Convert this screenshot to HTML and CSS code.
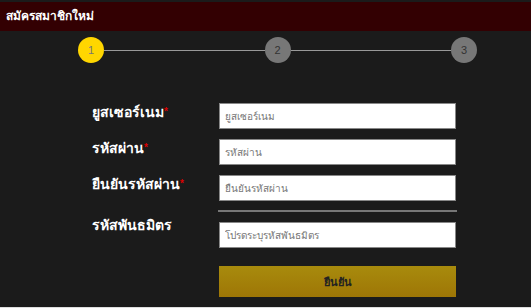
FILE: index.html
```html
<!DOCTYPE html>
<html lang="th">
<head>
    <meta charset="UTF-8">
    <meta name="viewport" content="width=device-width, initial-scale=1.0">
    <title>สมัครสมาชิกใหม่</title>
    <link rel="stylesheet" href="styles.css">
</head>
<body>
    <div class="header">สมัครสมาชิกใหม่</div>

    <div class="stepper">
        <div class="step active">1</div>
        <div class="step-line"></div>
        <div class="step">2</div>
        <div class="step-line"></div>
        <div class="step">3</div>
    </div>

    <form class="register-form" onsubmit="return false;">
        <label class="form-label" for="username">ยูสเซอร์เนม<span class="required">*</span></label>
        <input class="form-input" type="text" id="username" placeholder="ยูสเซอร์เนม">

        <label class="form-label" for="password">รหัสผ่าน<span class="required">*</span></label>
        <input class="form-input" type="password" id="password" placeholder="รหัสผ่าน">

        <label class="form-label" for="confirm-password">ยืนยันรหัสผ่าน<span class="required">*</span></label>
        <input class="form-input" type="password" id="confirm-password" placeholder="ยืนยันรหัสผ่าน">

        <div class="divider"></div>

        <label class="form-label optional" for="affiliate">รหัสพันธมิตร</label>
        <input class="form-input" type="text" id="affiliate" placeholder="โปรดระบุรหัสพันธมิตร">

        <button class="submit-button" type="submit">ยืนยัน</button>
    </form>
    <div class="footer-line"></div>
</body>
</html>
```

FILE: styles.css
```css
/* Register page, step 1 */
body {
    font-family: Tahoma, "Liberation Sans", sans-serif;
    background-color: #1b1b1b;
    color: #fff;
    margin: 0;
    padding-top: 2px;
    height: 308px;
    box-sizing: border-box;
    overflow: hidden;
    position: relative;
}

.header {
    background-color: #330002;
    height: 29px;
    line-height: 29px;
    padding-left: 6px;
    font-size: 12px;
    font-weight: bold;
    color: #fff;
}

/* Steps */
.stepper {
    display: flex;
    align-items: center;
    margin: 6px 0 0 78px;
    width: 399px;
}

.step {
    width: 26px;
    height: 26px;
    border-radius: 50%;
    background-color: #777;
    color: #333;
    font-size: 11px;
    display: flex;
    align-items: center;
    justify-content: center;
    flex-shrink: 0;
}

.step.active {
    background-color: #ffd600;
    color: #777;
}

.step-line {
    flex: 1;
    height: 1px;
    background-color: #999;
}

/* Form */
.register-form {
    display: grid;
    grid-template-columns: 127px 237px;
    margin: 40px 0 0 92px;
}

.form-label {
    font-size: 14px;
    font-weight: bold;
    color: #fff;
    padding-top: 1px;
    line-height: 16px;
}

.form-label.optional {
    margin-top: -6px;
}

.required {
    color: #d00;
    font-size: 10px;
    vertical-align: top;
}

.form-input {
    height: 26px;
    box-sizing: border-box;
    border: 1px solid #888;
    background-color: #fff;
    padding: 0 5px;
    font-family: inherit;
    font-size: 10px;
    color: #333;
    margin-bottom: 10px;
}

.form-input::placeholder {
    color: #777;
}

.divider {
    grid-column: 2;
    height: 2px;
    background-color: #777;
    margin: -1px -1px 10px -1px;
}

.submit-button {
    grid-column: 2;
    height: 31px;
    margin-top: 8px;
    border: none;
    background: linear-gradient(#a88b0d, #9e7606);
    color: #222;
    font-family: inherit;
    font-size: 11px;
    font-weight: bold;
    cursor: pointer;
}

.footer-line {
    position: absolute;
    left: 0;
    right: 0;
    bottom: 0;
    height: 1px;
    background-color: #ddd;
}
```
